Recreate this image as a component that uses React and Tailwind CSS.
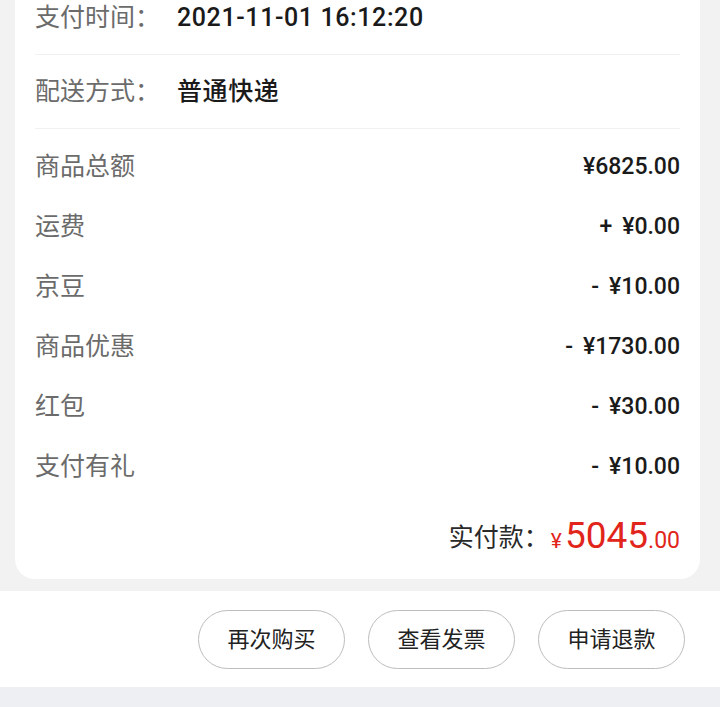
import React from 'react'

const infoRows = [
  { label: '支付时间：', value: '2021-11-01 16:12:20' },
  { label: '配送方式：', value: '普通快递' },
]

const priceRows = [
  { label: '商品总额', sign: '', value: '¥6825.00' },
  { label: '运费', sign: '+', value: '¥0.00' },
  { label: '京豆', sign: '-', value: '¥10.00' },
  { label: '商品优惠', sign: '-', value: '¥1730.00' },
  { label: '红包', sign: '-', value: '¥30.00' },
  { label: '支付有礼', sign: '-', value: '¥10.00' },
]

const actions = ['再次购买', '查看发票', '申请退款']

export default function App() {
  return (
    <div className="h-[707px] overflow-hidden bg-[#f2f2f2] flex flex-col font-['Roboto','Noto_Sans_CJK_SC',sans-serif]">
      <div className="ml-[15px] mr-[20px] -mt-[19px] bg-white rounded-[20px] px-5">
        {infoRows.map((row) => (
          <div key={row.label} className="h-[74px] flex items-center border-b border-[#f1f1f1]">
            <span className="w-[142px] text-[25px] text-[#6b6b6b]">{row.label}</span>
            <span className="text-[25px] font-medium text-[#1a1a1a] tracking-[0.6px]">{row.value}</span>
          </div>
        ))}

        <div className="pt-[8px]">
          {priceRows.map((row) => (
            <div key={row.label} className="h-[60px] flex items-center justify-between">
              <span className="text-[25px] text-[#6b6b6b]">{row.label}</span>
              <span className="flex items-center text-[23px] font-medium text-[#1a1a1a]">
                {row.sign && <span className="mr-[10px]">{row.sign}</span>}
                {row.value}
              </span>
            </div>
          ))}
        </div>

        <div className="h-[82px] flex items-center justify-end">
          <span className="text-[25px] text-[#2a2a2a]">实付款：</span>
          <span className="flex items-baseline text-[#e1251b] ml-[2px]">
            <span className="text-[21px] mr-[3px]">¥</span>
            <span className="text-[37px] leading-none">5045</span>
            <span className="text-[23px]">.00</span>
          </span>
        </div>
      </div>

      <div className="mt-3 h-[96px] bg-white flex items-center justify-end gap-[23px] pr-[35px]">
        {actions.map((a) => (
          <button
            key={a}
            className="w-[147px] h-[59px] rounded-full border border-[#bdbdbd] text-[22px] text-[#222] flex items-center justify-center"
          >
            {a}
          </button>
        ))}
      </div>

      <div className="flex-1 bg-[#eeeff3]" />
    </div>
  )
}
